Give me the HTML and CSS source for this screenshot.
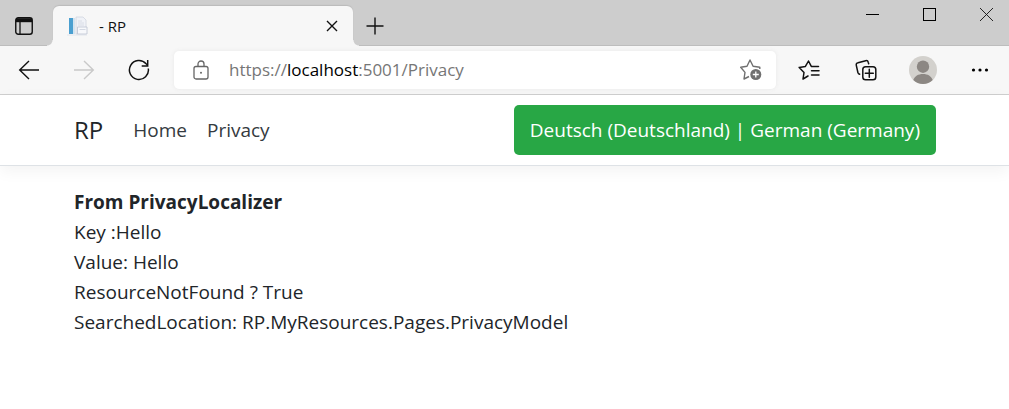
FILE: index.html
```html
<!DOCTYPE html>
<html lang="en">
<head>
<meta charset="utf-8">
<meta name="viewport" content="width=device-width, initial-scale=1">
<title>- RP</title>
<link rel="stylesheet" href="styles.css">
</head>
<body>
<div class="tabstrip">
  <button class="tab-actions" aria-label="Tab actions menu">
    <svg width="18" height="18" viewBox="0 0 18 18" fill="none" stroke="#111"><rect x=".75" y=".75" width="16.5" height="16.5" rx="2.5" stroke-width="1.4"/><path d="M1 3.2h16" stroke-width="4"/><path d="M5 5v12" stroke-width="1.3"/></svg>
  </button>
  <div class="tab">
    <svg class="favicon" width="22" height="20" viewBox="0 0 22 20"><path d="M2 2h4v16H2z" fill="#4a9fd0"/><path d="M6 2h2v16H6z" fill="#d3e3ef"/><path d="M9 1h7l3 3v14H9z" fill="#f0f2f7" stroke="#d0d5df" stroke-width=".8"/><path d="M11 5h4M11 7h6M11 9h6" stroke="#d3d8e2" stroke-width=".8"/><path d="M10.500 11h9.500v7h-9.500z" fill="#f7f8fb" stroke="#bcc3d2" stroke-width=".8"/><path d="M12.500 13.500h6" stroke="#d3d8e2"/><path d="M0 19h20" stroke="#dde1ea" stroke-width=".8"/></svg>
    <span class="tab-title">- RP</span>
    <button class="tab-close" aria-label="Close tab"><svg width="12" height="12" viewBox="0 0 12 12" stroke="#111" stroke-width="1.4"><path d="M1 1l10 10M11 1L1 11"/></svg></button>
  </div>
  <button class="new-tab" aria-label="New tab"><svg width="18" height="18" viewBox="0 0 18 18" stroke="#111" stroke-width="1.4"><path d="M9 .5v17M.5 9h17"/></svg></button>
  <div class="window-controls">
    <button class="window-button" aria-label="Minimize"><svg width="13" height="13" viewBox="0 0 13 13"><path d="M0 6.5h13" stroke="#000"/></svg></button>
    <button class="window-button" aria-label="Maximize"><svg width="13" height="13" viewBox="0 0 13 13"><rect x=".5" y=".5" width="12" height="12" fill="none" stroke="#000"/></svg></button>
    <button class="window-button" aria-label="Close"><svg width="13" height="13" viewBox="0 0 13 13"><path d="M0 0l13 13M13 0L0 13" stroke="#111" stroke-width=".9"/></svg></button>
  </div>
</div>
<div class="toolbar">
  <button class="tool" aria-label="Back"><svg width="22" height="20" viewBox="0 0 22 20" fill="none" stroke="#111" stroke-width="1.4"><path d="M21 10H2M11 1l-9.300 9L11 19"/></svg></button>
  <button class="tool" aria-label="Forward"><svg width="22" height="20" viewBox="0 0 22 20" fill="none" stroke="#c9c9c9" stroke-width="1.4"><path d="M1 10h19M11 1l9.300 9L11 19"/></svg></button>
  <button class="tool" aria-label="Refresh"><svg width="22" height="22" viewBox="0 0 22 22" fill="none" stroke="#111" stroke-width="1.5"><path d="M20.300 9.500a9.500 9.500 0 1 1-2.200-4.700L20 6.500M19.700 1v6h-6"/></svg></button>
  <div class="address">
    <svg class="lock" width="16" height="20" viewBox="0 0 16 20" fill="none" stroke="#666" stroke-width="1.3"><rect x="1" y="6.500" width="14" height="12.500" rx="2"/><path d="M5 6.500V4a3 3 0 0 1 6 0v2.500"/><circle cx="8" cy="12.700" r="1" fill="#666" stroke="none"/></svg>
    <div class="url" role="textbox" contenteditable="true" spellcheck="false" aria-label="Address">https://<span class="host">localhost</span>:5001/Privacy</div>
    <button class="favorite" aria-label="Add this page to favorites"><svg width="24" height="22" viewBox="0 0 24 22" fill="none" stroke="#707070" stroke-width="1.4" stroke-linejoin="round"><path d="M9 17.500l-5 2.500 1-6.600L.7 8.300l6.300-1L10 1l3.100 6.300 6.700 1v1.700"/><circle cx="15.800" cy="15.500" r="5.500" fill="#707070" stroke="none"/><path d="M15.800 12.500v6M12.800 15.500h6" stroke="#fff" stroke-width="1.300"/></svg></button>
  </div>
  <div class="tools-end">
    <button class="tool" aria-label="Favorites"><svg width="22" height="20" viewBox="0 0 22 20" fill="none" stroke="#111" stroke-width="1.500" stroke-linejoin="round" stroke-linecap="round"><path d="M10 16l-5 3 1-6.500L1.200 7.400l6.200-1L10.500 1l2.800 5.400H20.500M13.500 10.700H21M13.500 15H21"/></svg></button>
    <button class="tool" aria-label="Collections"><svg width="22" height="22" viewBox="0 0 22 22" fill="none" stroke="#111" stroke-width="1.500" stroke-linecap="round"><rect x="7.800" y="7.800" width="13" height="13" rx="2.800"/><path d="M14.300 10.300v8M10.300 14.300h8M4.600 15.300c-1-.3-1.400-.8-1.700-1.800L1.300 6.300c-.3-1.400.2-2.300 1.700-2.600l7.700-2c1.300-.3 2.200.2 2.500 1.500l.5 1.500"/></svg></button>
    <button class="tool" aria-label="Profile"><svg width="28" height="28" viewBox="0 0 28 28"><circle cx="14" cy="14" r="14" fill="#d3d1cd"/><circle cx="14" cy="10.700" r="6.200" fill="#8c8783"/><path d="M4.300 24.100c1.300-4 5-6.100 9.700-6.100s8.400 2.100 9.700 6.100A14 14 0 0 1 14 28a14 14 0 0 1-9.700-3.900z" fill="#8c8783"/></svg></button>
    <button class="tool" aria-label="Settings and more"><svg width="18" height="4" viewBox="0 0 18 4"><circle cx="2.500" cy="2" r="1.600"/><circle cx="9" cy="2" r="1.600"/><circle cx="15.500" cy="2" r="1.600"/></svg></button>
  </div>
</div>
<header class="navbar">
  <a class="brand" href="#">RP</a>
  <nav class="nav-links"><a href="#">Home</a><a href="#">Privacy</a></nav>
  <button class="culture">Deutsch (Deutschland) | German (Germany)</button>
</header>
<main class="content">
  <strong>From PrivacyLocalizer</strong>
  <div>Key :Hello</div>
  <div>Value: Hello</div>
  <div>ResourceNotFound ? True</div>
  <div>SearchedLocation: RP.MyResources.Pages.PrivacyModel</div>
</main>
</body>
</html>
```
FILE: styles.css
```css
* { box-sizing: border-box; }
body { margin: 0; background: #fff; color: #212529; font-family: "Open Sans", "Noto Sans", sans-serif; font-size: 19px; line-height: 30px; }
button { border: 0; padding: 0; background: none; font: inherit; color: inherit; display: flex; align-items: center; justify-content: center; }
svg { display: block; flex: none; }
a { color: inherit; text-decoration: none; }

.tabstrip { display: flex; height: 46px; background: #cdcdcd; box-shadow: inset 0 -1px #bdbdbd; }
.tab-actions { width: 48px; padding-top: 6px; }
.tab { position: relative; display: flex; align-items: center; width: 300px; margin: 6px 0 0 5px; padding: 0 14px; background: #f7f7f7; border-radius: 6px 6px 0 0; box-shadow: 0 -1px 1px #bbb; }
.tab::before, .tab::after { content: ""; position: absolute; bottom: 0; width: 6px; height: 6px; }
.tab::before { right: 100%; background: radial-gradient(circle at 0 0, #cdcdcd 5px, #f7f7f7 6px); }
.tab::after { left: 100%; background: radial-gradient(circle at 100% 0, #cdcdcd 5px, #f7f7f7 6px); }
.tab-title { flex: 1; margin-left: 10px; font-size: 15px; line-height: 20px; color: #111; }
.tab-close { width: 14px; height: 24px; }
.new-tab { width: 44px; padding-top: 6px; }
.window-controls { display: flex; gap: 11px; margin-left: auto; height: 29px; }
.window-button { width: 46px; }

.toolbar { display: flex; align-items: center; gap: 1px; height: 49px; padding: 0 2px; background: #f7f7f7; border-bottom: 1px solid #cfcfcf; }
.tool { width: 54px; height: 40px; }
.address { display: flex; flex: 1; align-items: center; height: 38px; margin: 0 5px 0 7px; padding: 0 12px 0 19px; background: #fff; border-radius: 5px; box-shadow: 0 0 4px #e8e8e8; }
.url { flex: 1; margin-left: 20px; font-size: 17px; line-height: 24px; color: #767676; outline: 0; white-space: nowrap; }
.host { color: #000; }
.tools-end { display: flex; gap: 3px; }

.navbar { display: flex; align-items: center; padding: 10px 73px 10px 74px; background: #fff; border-bottom: 1px solid #dee2e6; box-shadow: 0 5px 15px rgba(0, 0, 0, .05); }
.brand { font-size: 24px; margin-right: 30px; }
.nav-links { display: flex; gap: 20px; color: #343a40; }
.culture { height: 50px; margin-left: auto; padding: 0 16px; background: #28a745; border-radius: 5px; color: #fff; }
.content { padding: 21px 74px; }
.content strong { display: block; }
```
